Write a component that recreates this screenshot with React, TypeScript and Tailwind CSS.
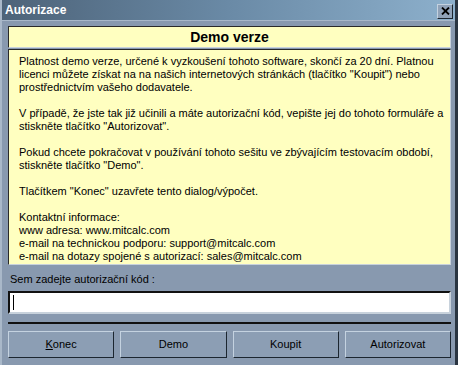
const paragraphs: string[][] = [
  [
    "Platnost demo verze, určené k vyzkoušení tohoto software, skončí za 20 dní. Platnou",
    'licenci můžete získat na na našich internetových stránkách (tlačítko "Koupit") nebo',
    "prostřednictvím vašeho dodavatele.",
  ],
  [
    "V případě, že jste tak již učinili a máte autorizační kód, vepište jej do tohoto formuláře a",
    'stiskněte tlačítko "Autorizovat".',
  ],
  [
    "Pokud chcete pokračovat v používání tohoto sešitu ve zbývajícím testovacím období,",
    'stiskněte tlačítko "Demo".',
  ],
  ['Tlačítkem "Konec" uzavřete tento dialog/výpočet.'],
  [
    "Kontaktní informace:",
    "www adresa: www.mitcalc.com",
    "e-mail na technickou podporu: support@mitcalc.com",
    "e-mail na dotazy spojené s autorizací: sales@mitcalc.com",
  ],
];

const Btn: React.FC<{ children: React.ReactNode }> = ({ children }) => (
  <button className="h-[27px] bg-[#8c9eb4] border border-t-[#c4d2e0] border-l-[#c4d2e0] border-r-[#1c2630] border-b-[#1c2630] text-[11px] text-black">
    {children}
  </button>
);

export default function App() {
  return (
    <div
      className="w-[458px] h-[365px] flex flex-col bg-[#8899af] border-l-2 border-r-[3px] border-l-[#a9b8c9] border-r-[#2a3541]"
      style={{ fontFamily: '"Liberation Sans", Arial, sans-serif' }}
    >
      {/* title bar */}
      <div className="h-[21px] flex items-center justify-between pl-[3px] pr-[2px] bg-gradient-to-r from-[#4d6379] via-[#6a8aa6] to-[#8db0cc] border-b border-b-[#a9b8c9]">
        <span className="text-white font-bold text-[12px]">Autorizace</span>
        <div className="w-[16px] h-[15px] mt-[2px] flex items-center justify-center bg-[#90a2b8] border border-t-[#c4d2e0] border-l-[#c4d2e0] border-r-[#1c2630] border-b-[#1c2630]">
          <svg width="9" height="8" viewBox="0 0 9 8">
            <path d="M1 0.5 L8 7.5 M8 0.5 L1 7.5" stroke="#000" strokeWidth="1.8" />
          </svg>
        </div>
      </div>

      <div className="flex flex-col pl-[6px] pr-[4px] pt-[5px]">
        <div className="h-[22px] flex items-center justify-center bg-[#ffffc0] border border-t-[#2a2a2a] border-l-[#2a2a2a] border-r-[#c8d2dc] border-b-[#c8d2dc]">
          <span className="font-bold text-[14px] text-black">Demo verze</span>
        </div>

        <div className="h-[216px] mt-px flex flex-col gap-[13px] pl-[10px] pt-[5px] bg-[#ffffc0] border border-t-[#2a2a2a] border-l-[#2a2a2a] border-r-[#c8d2dc] border-b-[#c8d2dc] text-[11px] leading-[13px] text-black">
          {paragraphs.map((p, i) => (
            <div key={i}>
              {p.map((line) => (
                <div key={line} className="whitespace-nowrap">
                  {line}
                </div>
              ))}
            </div>
          ))}
        </div>

        <div className="mt-[8px] pl-[2px] text-[11px] leading-[13px] text-black">Sem zadejte autorizační kód :</div>

        <div className="h-[23px] mt-[5px] flex items-center pl-[3px] bg-white border-2 border-t-[#111] border-l-[#111] border-r-[#c8d2dc] border-b-[#c8d2dc]">
          <div className="w-px h-[15px] bg-black" />
        </div>

        <div className="h-[2px] mt-[8px] bg-[#111]" />

        <div className="grid grid-cols-4 gap-[6px] mt-[7px]">
          <Btn>
            <span className="underline">K</span>onec
          </Btn>
          <Btn>Demo</Btn>
          <Btn>Koupit</Btn>
          <Btn>Autorizovat</Btn>
        </div>
      </div>
    </div>
  );
}
